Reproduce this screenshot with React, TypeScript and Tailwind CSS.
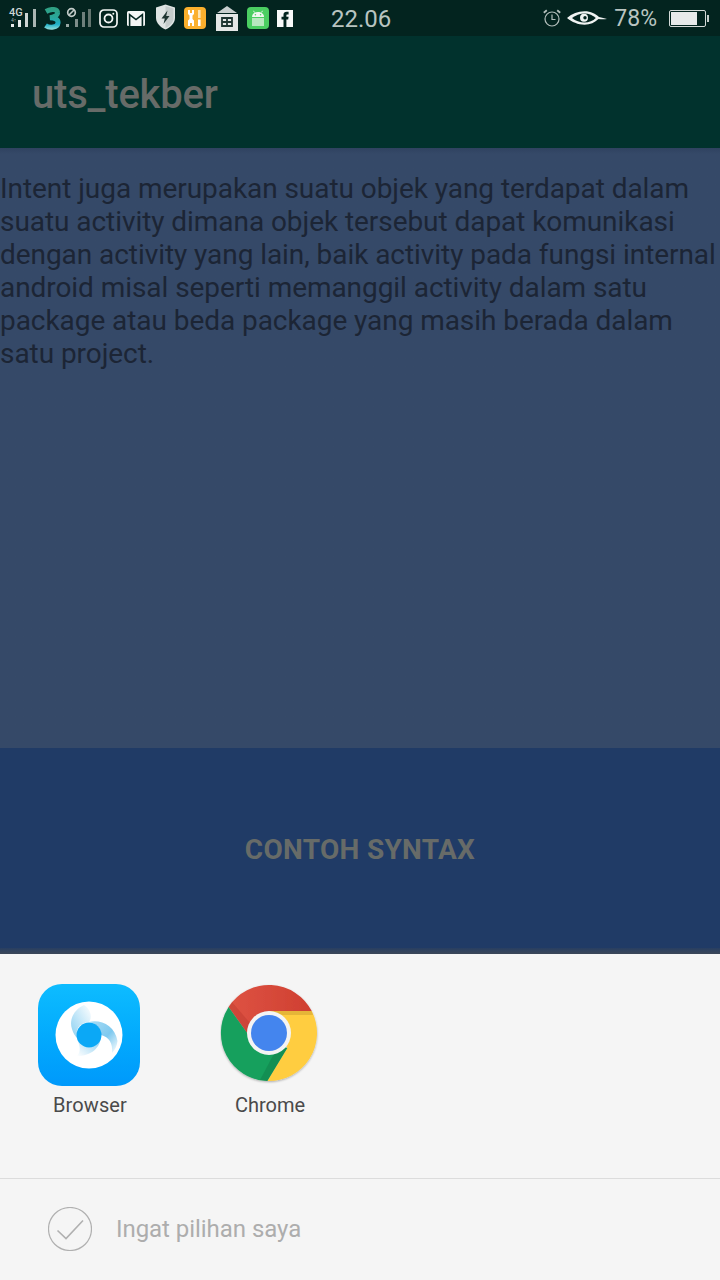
const font = { fontFamily: "Roboto, sans-serif" };

const StatusIcons = () => (
  <div className="flex items-center">
    {/* 4G signal */}
    <div className="relative ml-[9px] h-[36px] w-[27px]">
      <span className="absolute left-0 top-[7px] text-[11px] font-medium leading-[12px] text-[#cfd6d4]">4G</span>
      <span className="absolute left-[2px] top-[17px] text-[5px] leading-[6px] text-[#9aa7a4]">4↑</span>
      <svg className="absolute left-0 top-0" width="27" height="36" viewBox="0 0 27 36">
        <rect x="2" y="24" width="3" height="3" fill="#e6ebea" />
        <rect x="9" y="20" width="3" height="7" fill="#e6ebea" />
        <rect x="16" y="13" width="3" height="14" fill="#cdd5d3" />
        <rect x="24" y="9" width="3" height="18" fill="#aab6b3" />
      </svg>
    </div>
    {/* 3 logo */}
    <svg className="ml-[7px]" width="18" height="23" viewBox="0 0 18 23" fill="none">
      <defs>
        <linearGradient id="three" gradientUnits="userSpaceOnUse" x1="0" y1="0" x2="0" y2="23">
          <stop offset="0" stopColor="#2f9f80" />
          <stop offset="0.45" stopColor="#2aa79a" />
          <stop offset="0.75" stopColor="#1fb0c8" />
          <stop offset="1" stopColor="#9be3dc" />
        </linearGradient>
      </defs>
      <path
        d="M3 4.5 C8 1.5 14 1.8 14.5 5.3 C15 8.3 11 10 7 10.7 C12 10.7 15.5 12.5 15 16 C14.5 20.5 7 21.5 2.5 18.5"
        stroke="url(#three)"
        strokeWidth="5"
      />
    </svg>
    {/* second sim, no service */}
    <svg className="ml-[5px]" width="25" height="36" viewBox="0 0 25 36">
      <circle cx="5.5" cy="12.5" r="3.8" fill="none" stroke="#c3ccc9" strokeWidth="1.7" />
      <path d="M3 15 L8 10" stroke="#c3ccc9" strokeWidth="1.6" />
      <rect x="0" y="24" width="3" height="3" fill="#9aa7a4" />
      <rect x="9" y="19" width="3" height="8" fill="#7e8e8a" />
      <rect x="16" y="12" width="3" height="15" fill="#6e807c" />
      <rect x="22" y="9" width="3" height="18" fill="#63756f" />
    </svg>
    {/* instagram */}
    <svg className="ml-[8px]" width="19" height="19" viewBox="0 0 19 19" fill="none" stroke="#f4f6f5">
      <rect x="1" y="1" width="17" height="17" rx="4" strokeWidth="1.7" />
      <circle cx="9.5" cy="9.5" r="4" strokeWidth="1.8" />
      <circle cx="14.3" cy="4.7" r="1" fill="#f4f6f5" stroke="none" />
    </svg>
    {/* mail */}
    <svg className="ml-[9px]" width="18" height="15" viewBox="0 0 18 15">
      <rect x="0" y="0" width="18" height="15" rx="1.5" fill="#f4f6f5" />
      <path d="M2.6 15 V3.6 L9 8.6 L15.4 3.6 V15" fill="none" stroke="#03241f" strokeWidth="1.6" />
    </svg>
    {/* shield */}
    <svg className="ml-[11px] mb-[2px]" width="19" height="26" viewBox="0 0 19 26">
      <path d="M9.5 0.5 L19 3.5 V14 C19 19.5 14 23.5 9.5 25.5 C5 23.5 0 19.5 0 14 V3.5 Z" fill="#dfe4e3" />
      <path d="M9.5 2 L17.5 4.5 V14 C17.5 18.5 13.5 22 9.5 24 Z" fill="#c5cccb" />
      <path d="M11.5 6.5 L5.5 14.5 H8.8 L7.5 20 L13.5 12 H10.2 Z" fill="#1e3531" />
    </svg>
    {/* tools */}
    <div className="ml-[9px] flex h-[22px] w-[22px] items-center justify-center rounded-[4px] bg-[#fbb02d]">
      <svg width="16" height="18" viewBox="0 0 16 18" fill="#fff">
        <path d="M1 1 H3 V4 H5 V1 H7 V5 L5.5 6.5 V10 L7 11.5 V17 H5 V14 H3 V17 H1 V11.5 L2.5 10 V6.5 L1 5 Z" />
        <rect x="11" y="1" width="2.6" height="8" fill="#fde3ae" />
        <rect x="11" y="10.5" width="2.6" height="6.5" />
      </svg>
    </div>
    {/* store */}
    <svg className="ml-[10px]" width="22" height="25" viewBox="0 0 22 25">
      <path d="M11 0 L21 7 H1 Z" fill="#c9cfce" />
      <rect x="0" y="8" width="22" height="17" fill="#e4e7e6" />
      <path d="M6 12 H16 V20 H6 Z M11 12 V20 M6 16 H16" fill="none" stroke="#1e3531" strokeWidth="1.8" />
    </svg>
    {/* android */}
    <div className="ml-[9px] flex h-[22px] w-[22px] items-center justify-center rounded-[4px] bg-[#4bce62]">
      <svg width="16" height="16" viewBox="0 0 16 16">
        <path d="M2 7 C2 3.5 5 2 8 2 C11 2 14 3.5 14 7 Z" fill="#f2f7f2" />
        <path d="M4.5 2.5 L3.5 0.8 M11.5 2.5 L12.5 0.8" stroke="#f2f7f2" strokeWidth="0.9" />
        <circle cx="5.4" cy="4.8" r="0.8" fill="#4bce62" />
        <circle cx="10.6" cy="4.8" r="0.8" fill="#4bce62" />
        <rect x="2" y="8" width="12" height="8" fill="#b7e8bf" />
      </svg>
    </div>
    {/* facebook */}
    <svg className="ml-[8px] mt-[1px]" width="16" height="17" viewBox="0 0 16 17">
      <rect width="16" height="17" fill="#f8f9f9" />
      <path d="M6.5 17 V9.5 H4.5 V6.8 H6.5 V4.8 C6.5 2.6 7.8 1.8 9.6 1.8 H11.6 V4.4 H10.4 C9.6 4.4 9.4 4.8 9.4 5.4 V6.8 H11.6 L11.2 9.5 H9.4 V17 Z" fill="#03241f" />
    </svg>
  </div>
);

const StatusRight = () => (
  <div className="flex items-center">
    <svg width="18" height="18" viewBox="0 0 18 18" fill="none" stroke="#b4bfbc" strokeWidth="1.2">
      <circle cx="9" cy="10" r="7" />
      <path d="M9 5.5 V10.5 H12.5" />
      <path d="M0.8 3.8 L3.8 1.2 M17.2 3.8 L14.2 1.2" strokeWidth="1.8" />
    </svg>
    <svg className="ml-[6px]" width="40" height="14" viewBox="0 0 40 14">
      <path d="M0 7 C5 2.5 11 0.3 17.5 0.3 C24 0.3 28.5 3 32 6 C35 6.8 37.5 7 40 8 C36.5 8.4 34 8.2 31.5 8 C28 11.5 23 13.7 17.5 13.7 C11 13.7 5 11 0 7 Z" fill="#f0f3f2" />
      <path d="M5 7 C8.5 4.2 13 2.4 17.5 2.4 C22 2.4 26 4.2 28.8 7 C26 9.8 22 11.6 17.5 11.6 C13 11.6 8.5 9.8 5 7 Z" fill="#03241f" />
      <circle cx="17" cy="6.8" r="4" fill="#f0f3f2" />
      <circle cx="18" cy="6.8" r="1.7" fill="#03241f" />
    </svg>
    <span className="ml-[7px] pt-[1px] text-[23px] leading-none text-[#b9c4c1]" style={font}>78%</span>
    <div className="ml-[12px] flex items-center">
      <div className="flex h-[17px] w-[37px] items-center rounded-[2px] border border-[#d4dad8] p-[1px]">
        <div className="h-full w-[26px] bg-[#e7eaea]" />
      </div>
      <div className="ml-[1px] h-[7px] w-[2px] bg-[#c6cecc]" />
    </div>
  </div>
);

const BrowserIcon = () => (
  <div className="flex h-[102px] w-[102px] items-center justify-center rounded-[24px] bg-gradient-to-b from-[#0ebcff] to-[#0099fb]">
    <svg width="68" height="68" viewBox="0 0 68 68">
      <defs>
        <linearGradient id="bladeA" x1="0" y1="1" x2="1" y2="0">
          <stop offset="0" stopColor="#8ad0f2" />
          <stop offset="1" stopColor="#ffffff" />
        </linearGradient>
        <linearGradient id="bladeB" x1="0" y1="0" x2="1" y2="1">
          <stop offset="0" stopColor="#a9dcf5" />
          <stop offset="0.55" stopColor="#7ec9ef" />
          <stop offset="1" stopColor="#ffffff" />
        </linearGradient>
        <linearGradient id="bladeC" x1="1" y1="0" x2="0" y2="1">
          <stop offset="0" stopColor="#7ec9ef" />
          <stop offset="1" stopColor="#ffffff" />
        </linearGradient>
      </defs>
      <circle cx="34" cy="34" r="33.5" fill="#fff" />
      <path d="M29 4 C18 9 14 20 17 28 C18 32 20 35 22.5 37.5 C20 28 24 22 34 21 C38 15 35 8 29 4 Z" fill="url(#bladeA)" />
      <path d="M34 21 C46 18 60 25 62.5 40 C62 45 60 49 57 52 C58 42 54 36 46 34 C46 27 41 22 34 21 Z" fill="url(#bladeB)" />
      <path d="M22 37 C24 44 30 47 36 46 C40 45 43 42 46 34 C46 47 36 55 22 55 C27 50 24 43 22 37 Z" fill="url(#bladeC)" />
      <circle cx="34" cy="34" r="12.5" fill="#0ba8f6" />
    </svg>
  </div>
);

const ChromeIcon = () => (
  <svg width="100" height="100" viewBox="0 0 100 100">
    <defs>
      <filter id="soft" x="-10%" y="-10%" width="120%" height="120%">
        <feDropShadow dx="0" dy="1" stdDeviation="1" floodColor="#000" floodOpacity="0.3" />
      </filter>
      <linearGradient id="red" x1="0" y1="0" x2="1" y2="0">
        <stop offset="0" stopColor="#de5343" />
        <stop offset="1" stopColor="#cf3f31" />
      </linearGradient>
    </defs>
    <g filter="url(#soft)">
      <path d="M91.7 27.1 L49 27.1 L67.3 64 L47.3 97 A48 48 0 0 0 91.7 27.1 Z" fill="#ffcd40" />
      <path d="M8.6 23 A48 48 0 0 1 91.7 27.1 L49 27.1 L30.7 54 Z" fill="url(#red)" />
      <path d="M8.6 23 L30.7 54 L67.3 64 L47.3 97 A48 48 0 0 1 8.6 23 Z" fill="#16a05d" />
    </g>
    {/* the darker bands beside each blade */}
    <path d="M8.6 23 L30.7 54 L36 46 L12 18 Z" fill="#a5281f" opacity="0.25" />
    <path d="M49 27.1 H91.7 L93 31 H62 Z" fill="#c59a2e" opacity="0.45" />
    <path d="M67.3 64 L47.3 97 L40 96 L58 62 Z" fill="#0c6b3d" opacity="0.3" />
    <circle cx="49" cy="49" r="22" fill="#f4f4f4" />
    <circle cx="49" cy="49" r="18" fill="#4485ee" />
  </svg>
);

export default function App() {
  return (
    <div className="flex h-[1280px] w-[720px] flex-col overflow-hidden bg-[#f5f5f5]" style={font}>
      {/* status bar */}
      <div className="flex h-[36px] items-center justify-between bg-[#03241f] pr-[11px]">
        <div className="flex items-center">
          <StatusIcons />
          <span className="ml-[38px] pt-[2px] text-[24px] leading-none text-[#b9c4c1]">22.06</span>
        </div>
        <StatusRight />
      </div>

      {/* action bar */}
      <div className="flex h-[112px] items-center bg-[#01322d] pl-[32px] pt-[5px]">
        <span className="text-[40px] font-medium tracking-[-0.2px] text-[#676b68]">uts_tekber</span>
      </div>

      {/* description */}
      <div className="h-[600px] bg-[#354968] bg-gradient-to-b from-[#2f4260] to-[#354968] to-[6px]">
        <p className="pt-[24px] text-[28px] leading-[33px] tracking-[-0.06px] text-[#1c2535]">
          Intent juga merupakan suatu objek yang terdapat dalam suatu activity dimana objek tersebut dapat komunikasi dengan activity yang lain, baik activity pada fungsi internal android misal seperti memanggil activity dalam satu package atau beda package yang masih berada dalam satu project.
        </p>
      </div>

      {/* button */}
      <div className="flex h-[200px] items-center justify-center bg-[#203b66] pt-[4px]">
        <span className="text-[28px] font-bold tracking-[0.3px] text-[#676b68]">CONTOH SYNTAX</span>
      </div>
      <div className="h-[6px] bg-gradient-to-b from-[#283f62] to-[#3b4657]" />

      {/* chooser sheet */}
      <div className="flex flex-1 flex-col bg-[#f5f5f5]">
        <div className="flex h-[225px] items-start border-b border-[#dcdcdc]">
          <div className="mt-[30px] ml-[29px] flex w-[120px] flex-col items-center">
            <BrowserIcon />
            <span className="mt-[7px] pl-[2px] text-[20px] leading-[24px] tracking-[0.1px] text-[#4a4a4a]">Browser</span>
          </div>
          <div className="mt-[30px] ml-[61px] flex w-[120px] flex-col items-center">
            <ChromeIcon />
            <span className="mt-[9px] text-[20px] leading-[24px] text-[#4a4a4a]">Chrome</span>
          </div>
        </div>
        <div className="flex flex-1 items-center pb-[1px] pl-[48px]">
          <svg width="44" height="44" viewBox="0 0 44 44" fill="none" stroke="#b0b0b0">
            <circle cx="22" cy="22" r="21.5" strokeWidth="1.2" />
            <path d="M9.5 23.5 L18 31.5 L35 13.5" strokeWidth="1.6" />
          </svg>
          <span className="ml-[24px] text-[24px] tracking-[-0.05px] text-[#adadad]">Ingat pilihan saya</span>
        </div>
      </div>
    </div>
  );
}
